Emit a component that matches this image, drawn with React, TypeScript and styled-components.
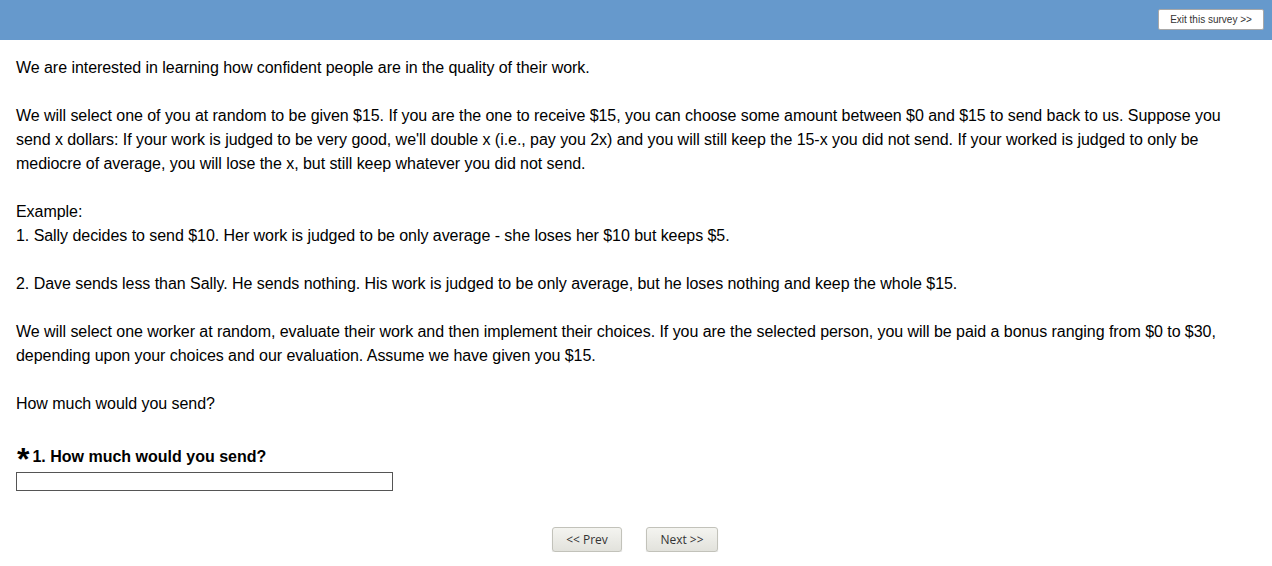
import React from "react";
import styled, { createGlobalStyle } from "styled-components";

const GlobalStyle = createGlobalStyle`
  html, body {
    margin: 0;
    padding: 0;
    background: #ffffff;
  }
  body {
    font-family: "Liberation Sans", Arial, sans-serif;
    color: #000000;
  }
`;

export default function App() {
  return (
    <>
      <GlobalStyle />
      <Header>
        <ExitButton type="button">Exit this survey &gt;&gt;</ExitButton>
      </Header>
      <Content>
        <Intro>
          We are interested in learning how confident people are in the quality of their work.
          <br />
          <br />
          We will select one of you at random to be given $15. If you are the one to receive $15, you can
          choose some amount between $0 and $15 to send back to us. Suppose you send x dollars: If your work
          is judged to be very good, we'll double x (i.e., pay you 2x) and you will still keep the 15-x you did
          not send. If your worked is judged to only be mediocre of average, you will lose the x, but still
          keep whatever you did not send.
          <br />
          <br />
          Example:
          <br />
          1. Sally decides to send $10. Her work is judged to be only average - she loses her $10 but keeps $5.
          <br />
          <br />
          2. Dave sends less than Sally. He sends nothing. His work is judged to be only average, but he loses
          nothing and keep the whole $15.
          <br />
          <br />
          We will select one worker at random, evaluate their work and then implement their choices. If you
          are the selected person, you will be paid a bonus ranging from $0 to $30, depending upon your
          choices and our evaluation. Assume we have given you $15.
          <br />
          <br />
          How much would you send?
        </Intro>
        <Question>
          <QuestionTitle>
            <Required>*</Required>
            1. How much would you send?
          </QuestionTitle>
          <Answer type="text" />
        </Question>
        <Nav>
          <NavButton type="button" $width={70}>&lt;&lt; Prev</NavButton>
          <NavButton type="button" $width={72}>Next &gt;&gt;</NavButton>
        </Nav>
      </Content>
    </>
  );
}

const Header = styled.div`
  height: 40px;
  background: #6699cc;
  display: flex;
  justify-content: flex-end;
  align-items: flex-start;
  padding: 9px 8px 0 0;
  box-sizing: border-box;
`;

const ExitButton = styled.button`
  height: 21px;
  width: 106px;
  padding: 0;
  background: #ffffff;
  border: 1px solid #a8a8a8;
  border-radius: 2px;
  font-family: "Liberation Sans", Arial, sans-serif;
  font-size: 10px;
  color: #333333;
  cursor: pointer;
`;

const Content = styled.div`
  padding: 16px 16px 0 16px;
`;

const Intro = styled.div`
  font-size: 16px;
  line-height: 24px;
  letter-spacing: -0.05px;
`;

const Question = styled.div`
  margin-top: 27px;
`;

const QuestionTitle = styled.div`
  display: flex;
  align-items: baseline;
  font-size: 16px;
  font-weight: bold;
  line-height: 22px;
`;

const Required = styled.span`
  font-size: 32px;
  line-height: 16px;
  margin-right: 4px;
  position: relative;
  top: 8px;
  left: 1px;
`;

const Answer = styled.input`
  display: block;
  margin-top: 4px;
  width: 377px;
  height: 19px;
  box-sizing: border-box;
  border: 1px solid #555555;
  padding: 0 3px;
  font-family: "Liberation Sans", Arial, sans-serif;
  font-size: 13px;
  outline: none;
`;

const Nav = styled.div`
  display: flex;
  justify-content: center;
  gap: 24px;
  margin-top: 36px;
  padding-right: 2px;
`;

const NavButton = styled.button<{ $width: number }>`
  width: ${({ $width }) => $width}px;
  height: 25px;
  padding: 0;
  border: 1px solid #c2c2ba;
  border-radius: 3px;
  background: linear-gradient(#f4f4f0, #e2e2dc);
  box-shadow: 0 1px 1px rgba(0, 0, 0, 0.15);
  font-family: "Open Sans", sans-serif;
  font-size: 12px;
  color: #333333;
  cursor: pointer;
`;
